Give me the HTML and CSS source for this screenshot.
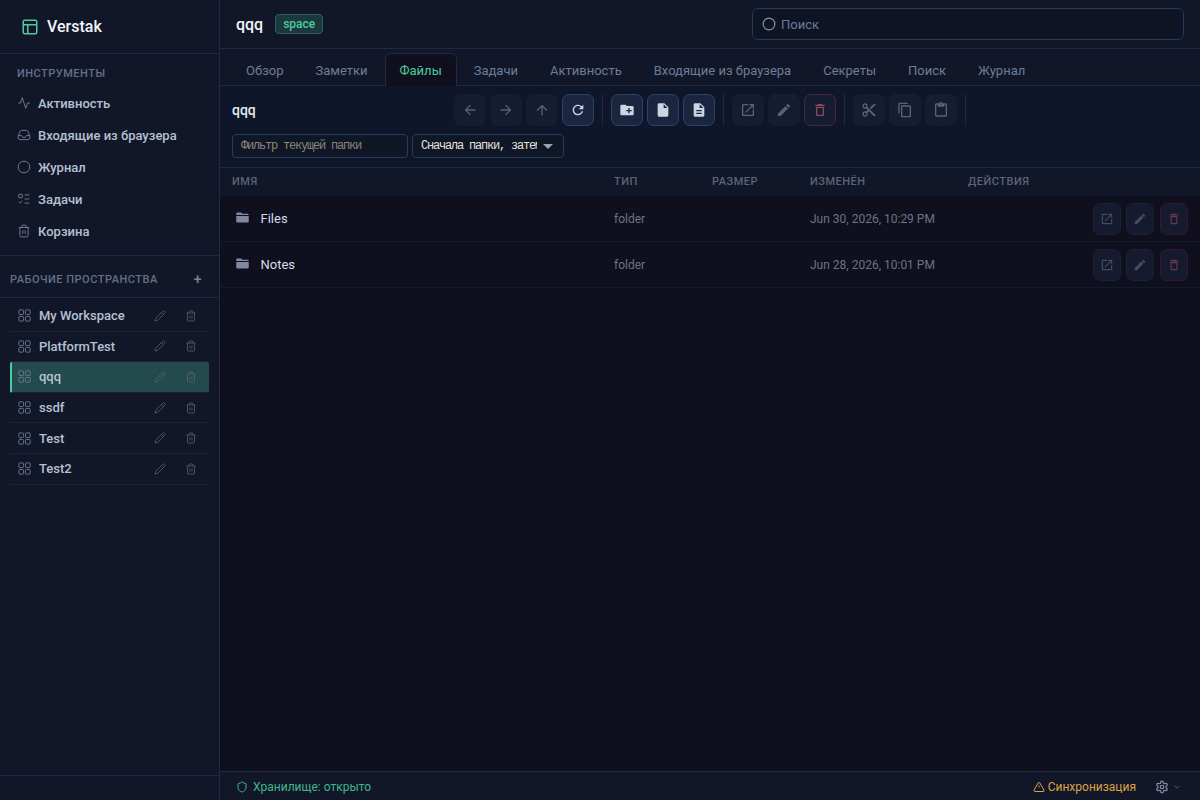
FILE: index.html
```html
<!DOCTYPE html>
<html lang="ru">
<head>
    <meta charset="UTF-8">
    <title>Verstak</title>
    <link rel="stylesheet" href="styles.css">
</head>
<body>
    <svg class="defs" width="0" height="0">
        <symbol id="i-pencil" viewBox="0 0 24 24"><path d="M17 3a2.85 2.83 0 1 1 4 4L7.5 20.5 2 22l1.5-5.5Z M15 5l4 4"/></symbol>
        <symbol id="i-trash" viewBox="0 0 24 24"><path d="M3 6h18 M19 6v14a2 2 0 0 1-2 2H7a2 2 0 0 1-2-2V6 M8 6V4a2 2 0 0 1 2-2h4a2 2 0 0 1 2 2v2 M10 11v6 M14 11v6"/></symbol>
        <symbol id="i-grid" viewBox="0 0 24 24"><rect x="3" y="3" width="7.500" height="7.500" rx="1.500"/><rect x="13.500" y="3" width="7.500" height="7.500" rx="1.500"/><rect x="3" y="13.500" width="7.500" height="7.500" rx="1.500"/><rect x="13.500" y="13.500" width="7.500" height="7.500" rx="1.500"/></symbol>
        <symbol id="m-open" viewBox="0 0 24 24"><path d="M19 19H5V5h7V3H5c-1.11 0-2 .9-2 2v14c0 1.1.89 2 2 2h14c1.1 0 2-.9 2-2v-7h-2v7zM14 3v2h3.59l-9.83 9.83 1.41 1.41L19 6.41V10h2V3h-7z"/></symbol>
        <symbol id="m-edit" viewBox="0 0 24 24"><path d="M3 17.25V21h3.75L17.81 9.94l-3.75-3.75L3 17.25zM20.71 7.04c.39-.39.39-1.02 0-1.41l-2.34-2.34c-.39-.39-1.02-.39-1.41 0l-1.83 1.83 3.75 3.75 1.83-1.83z"/></symbol>
        <symbol id="m-delete" viewBox="0 0 24 24"><path d="M6 19c0 1.1.9 2 2 2h8c1.1 0 2-.9 2-2V7H6v12zM8 9h8v10H8V9zm7.5-5l-1-1h-5l-1 1H5v2h14V4h-3.5z"/></symbol>
        <symbol id="m-folder" viewBox="0 0 24 24"><path d="M4 4h6l2 2h8c1.1 0 2 .9 2 2H2V6c0-1.1.9-2 2-2zM2 9.500h20V18c0 1.100-.9 2-2 2H4c-1.100 0-2-.9-2-2z"/></symbol>
    </svg>

    <div class="app">
        <aside class="sidebar">
            <div class="brand">
                <svg class="brand-icon" viewBox="0 0 24 24"><rect x="3" y="3" width="18" height="18" rx="2"/><path d="M3 9h18 M9 9v12"/></svg>
                <span>Verstak</span>
            </div>

            <div class="tools">
                <div class="section-title">ИНСТРУМЕНТЫ</div>
                <a class="tool">
                    <svg class="line-icon" viewBox="0 0 24 24"><path d="M22 12h-4l-3 9L9 3l-3 9H2"/></svg>
                    Активность
                </a>
                <a class="tool">
                    <svg class="line-icon" viewBox="0 0 24 24"><path d="M22 13h-6l-2 3h-4l-2-3H2 M5.500 6 2.500 12.500a3 3 0 0 0-.5 1.500v3a3 3 0 0 0 3 3h14a3 3 0 0 0 3-3v-3a3 3 0 0 0-.5-1.500L18.500 6a3 3 0 0 0-2.500-2H8a3 3 0 0 0-2.500 2z"/></svg>
                    Входящие из браузера
                </a>
                <a class="tool">
                    <svg class="line-icon" viewBox="0 0 24 24"><circle cx="12" cy="12" r="10"/></svg>
                    Журнал
                </a>
                <a class="tool">
                    <svg class="line-icon" viewBox="0 0 24 24"><rect x="3" y="4" width="6" height="6" rx="1"/><path d="M13 5h8 M13 12h8 M13 19h8 M3 17l2 2 4-4"/></svg>
                    Задачи
                </a>
                <a class="tool">
                    <svg class="line-icon" viewBox="0 0 24 24"><use href="#i-trash"/></svg>
                    Корзина
                </a>
            </div>

            <div class="ws-head">
                <span>РАБОЧИЕ ПРОСТРАНСТВА</span>
                <span class="ws-add">+</span>
            </div>

            <ul class="ws-list">
                <li class="ws-item">
                    <svg class="ws-icon"><use href="#i-grid"/></svg>
                    <span class="ws-name">My Workspace</span>
                    <svg class="ws-act"><use href="#i-pencil"/></svg>
                    <svg class="ws-act"><use href="#i-trash"/></svg>
                </li>
                <li class="ws-item">
                    <svg class="ws-icon"><use href="#i-grid"/></svg>
                    <span class="ws-name">PlatformTest</span>
                    <svg class="ws-act"><use href="#i-pencil"/></svg>
                    <svg class="ws-act"><use href="#i-trash"/></svg>
                </li>
                <li class="ws-item active">
                    <svg class="ws-icon"><use href="#i-grid"/></svg>
                    <span class="ws-name">qqq</span>
                    <svg class="ws-act"><use href="#i-pencil"/></svg>
                    <svg class="ws-act"><use href="#i-trash"/></svg>
                </li>
                <li class="ws-item">
                    <svg class="ws-icon"><use href="#i-grid"/></svg>
                    <span class="ws-name">ssdf</span>
                    <svg class="ws-act"><use href="#i-pencil"/></svg>
                    <svg class="ws-act"><use href="#i-trash"/></svg>
                </li>
                <li class="ws-item">
                    <svg class="ws-icon"><use href="#i-grid"/></svg>
                    <span class="ws-name">Test</span>
                    <svg class="ws-act"><use href="#i-pencil"/></svg>
                    <svg class="ws-act"><use href="#i-trash"/></svg>
                </li>
                <li class="ws-item">
                    <svg class="ws-icon"><use href="#i-grid"/></svg>
                    <span class="ws-name">Test2</span>
                    <svg class="ws-act"><use href="#i-pencil"/></svg>
                    <svg class="ws-act"><use href="#i-trash"/></svg>
                </li>
            </ul>

            <div class="side-foot"></div>
        </aside>

        <main class="main">
            <header class="topbar">
                <div class="title-wrap">
                    <h1>qqq</h1>
                    <span class="badge">space</span>
                </div>
                <div class="search">
                    <svg class="search-icon" viewBox="0 0 24 24"><circle cx="12" cy="12" r="10"/></svg>
                    <span>Поиск</span>
                </div>
            </header>

            <nav class="tabs">
                <a class="tab">Обзор</a>
                <a class="tab">Заметки</a>
                <a class="tab active">Файлы</a>
                <a class="tab">Задачи</a>
                <a class="tab">Активность</a>
                <a class="tab">Входящие из браузера</a>
                <a class="tab">Секреты</a>
                <a class="tab">Поиск</a>
                <a class="tab">Журнал</a>
            </nav>

            <section class="toolbar">
                <div class="toolbar-top">
                    <div class="path">qqq</div>
                    <div class="tool-group">
                        <button class="tb off"><svg viewBox="0 0 24 24"><path d="M20 11H7.830l5.590-5.590L12 4l-8 8 8 8 1.410-1.410L7.830 13H20v-2z"/></svg></button>
                        <button class="tb off"><svg viewBox="0 0 24 24"><path d="M12 4l-1.410 1.410L16.170 11H4v2h12.170l-5.580 5.590L12 20l8-8z"/></svg></button>
                        <button class="tb off"><svg viewBox="0 0 24 24"><path d="M4 12l1.410 1.410L11 7.830V20h2V7.830l5.580 5.590L20 12l-8-8-8 8z"/></svg></button>
                        <button class="tb on"><svg viewBox="0 0 24 24"><path d="M17.650 6.350A7.958 7.958 0 0 0 12 4c-4.420 0-7.990 3.580-7.990 8s3.570 8 7.990 8c3.730 0 6.840-2.550 7.730-6h-2.080A5.990 5.990 0 0 1 12 18c-3.310 0-6-2.690-6-6s2.690-6 6-6c1.660 0 3.140.690 4.220 1.780L13 11h7V4l-2.350 2.350z"/></svg></button>
                    </div>
                    <div class="tool-group">
                        <button class="tb on"><svg viewBox="0 0 24 24"><path d="M20 6h-8l-2-2H4c-1.110 0-1.990.890-1.990 2L2 18c0 1.110.890 2 2 2h16c1.110 0 2-.890 2-2V8c0-1.110-.890-2-2-2zm-1 8h-3v3h-2v-3h-3v-2h3V9h2v3h3v2z"/></svg></button>
                        <button class="tb on"><svg viewBox="0 0 24 24"><path d="M6 2c-1.100 0-1.990.900-1.990 2L4 20c0 1.100.890 2 1.990 2H18c1.100 0 2-.900 2-2V8l-6-6H6zm7 7V3.500L18.500 9H13z"/></svg></button>
                        <button class="tb on"><svg viewBox="0 0 24 24"><path d="M14 2H6c-1.100 0-1.990.900-1.990 2L4 20c0 1.100.890 2 1.990 2H18c1.100 0 2-.900 2-2V8l-6-6zm2 16H8v-2h8v2zm0-4H8v-2h8v2zm-3-5V3.500L18.500 9H13z"/></svg></button>
                    </div>
                    <div class="tool-group">
                        <button class="tb off"><svg><use href="#m-open"/></svg></button>
                        <button class="tb off"><svg><use href="#m-edit"/></svg></button>
                        <button class="tb off danger"><svg><use href="#m-delete"/></svg></button>
                    </div>
                    <div class="tool-group">
                        <button class="tb off"><svg viewBox="0 0 24 24"><path d="M9.640 7.640c.23-.5.36-1.050.36-1.640 0-2.210-1.790-4-4-4S2 3.790 2 6s1.790 4 4 4c.59 0 1.140-.13 1.640-.36L10 12l-2.360 2.360C7.140 14.130 6.590 14 6 14c-2.210 0-4 1.790-4 4s1.790 4 4 4 4-1.790 4-4c0-.59-.13-1.140-.36-1.640L12 14l7 7h3v-1L9.640 7.640zM6 8c-1.100 0-2-.89-2-2s.9-2 2-2 2 .89 2 2-.9 2-2 2zm0 12c-1.100 0-2-.89-2-2s.9-2 2-2 2 .89 2 2-.9 2-2 2zm6-7.500c-.28 0-.5-.22-.5-.5s.22-.5.5-.5.5.22.5.5-.22.5-.5.5zM19 3l-6 6 2 2 7-7V3h-3z"/></svg></button>
                        <button class="tb off"><svg viewBox="0 0 24 24"><path d="M16 1H4c-1.100 0-2 .9-2 2v14h2V3h12V1zm3 4H8c-1.100 0-2 .9-2 2v14c0 1.100.9 2 2 2h11c1.100 0 2-.9 2-2V7c0-1.100-.9-2-2-2zm0 16H8V7h11v14z"/></svg></button>
                        <button class="tb off"><svg viewBox="0 0 24 24"><path d="M19 2h-4.180C14.400.84 13.300 0 12 0c-1.300 0-2.400.84-2.820 2H5c-1.100 0-2 .9-2 2v16c0 1.100.9 2 2 2h14c1.100 0 2-.9 2-2V4c0-1.100-.9-2-2-2zm-7 0c.55 0 1 .45 1 1s-.45 1-1 1-1-.45-1-1 .45-1 1-1zm7 18H5V4h2v3h10V4h2v16z"/></svg></button>
                    </div>
                </div>
                <div class="toolbar-bottom">
                    <input class="filter" type="text" placeholder="Фильтр текущей папки">
                    <div class="sort-wrap">
                        <select class="sort">
                            <option>Сначала папки, затем файлы</option>
                        </select>
                        <span class="sort-arrow"></span>
                    </div>
                </div>
            </section>

            <div class="table">
                <div class="row head">
                    <div>ИМЯ</div>
                    <div>ТИП</div>
                    <div>РАЗМЕР</div>
                    <div>ИЗМЕНЁН</div>
                    <div>ДЕЙСТВИЯ</div>
                </div>
                <div class="row item">
                    <div class="name"><svg class="folder"><use href="#m-folder"/></svg>Files</div>
                    <div class="muted">folder</div>
                    <div></div>
                    <div class="muted">Jun 30, 2026, 10:29 PM</div>
                    <div class="actions">
                        <button class="ra"><svg><use href="#m-open"/></svg></button>
                        <button class="ra"><svg><use href="#m-edit"/></svg></button>
                        <button class="ra danger"><svg><use href="#m-delete"/></svg></button>
                    </div>
                </div>
                <div class="row item">
                    <div class="name"><svg class="folder"><use href="#m-folder"/></svg>Notes</div>
                    <div class="muted">folder</div>
                    <div></div>
                    <div class="muted">Jun 28, 2026, 10:01 PM</div>
                    <div class="actions">
                        <button class="ra"><svg><use href="#m-open"/></svg></button>
                        <button class="ra"><svg><use href="#m-edit"/></svg></button>
                        <button class="ra danger"><svg><use href="#m-delete"/></svg></button>
                    </div>
                </div>
            </div>

            <footer class="statusbar">
                <div class="vault">
                    <svg class="st-icon" viewBox="0 0 24 24"><path d="M20 13c0 5-3.500 7.500-7.660 8.950a1 1 0 0 1-.67-.01C7.500 20.500 4 18 4 13V6a1 1 0 0 1 1-1c2 0 4.500-1.200 6.240-2.720a1.170 1.170 0 0 1 1.520 0C14.510 3.810 17 5 19 5a1 1 0 0 1 1 1z"/></svg>
                    Хранилище: открыто
                </div>
                <div class="status-right">
                    <div class="sync">
                        <svg class="st-icon" viewBox="0 0 24 24"><path d="m21.730 18-8-14a2 2 0 0 0-3.480 0l-8 14A2 2 0 0 0 4 21h16a2 2 0 0 0 1.730-3 M12 9v4 M12 17h.01"/></svg>
                        Синхронизация
                    </div>
                    <div class="settings">
                        <svg class="gear" viewBox="0 0 24 24"><path d="M12.220 2h-.44a2 2 0 0 0-2 2v.18a2 2 0 0 1-1 1.730l-.43.25a2 2 0 0 1-2 0l-.15-.08a2 2 0 0 0-2.730.73l-.22.38a2 2 0 0 0 .73 2.730l.15.1a2 2 0 0 1 1 1.720v.51a2 2 0 0 1-1 1.740l-.15.09a2 2 0 0 0-.73 2.730l.22.38a2 2 0 0 0 2.730.73l.15-.08a2 2 0 0 1 2 0l.43.25a2 2 0 0 1 1 1.730V20a2 2 0 0 0 2 2h.44a2 2 0 0 0 2-2v-.18a2 2 0 0 1 1-1.730l.43-.25a2 2 0 0 1 2 0l.15.08a2 2 0 0 0 2.730-.73l.22-.39a2 2 0 0 0-.73-2.730l-.15-.08a2 2 0 0 1-1-1.740v-.5a2 2 0 0 1 1-1.740l.15-.09a2 2 0 0 0 .73-2.730l-.22-.38a2 2 0 0 0-2.730-.73l-.15.08a2 2 0 0 1-2 0l-.43-.25a2 2 0 0 1-1-1.730V4a2 2 0 0 0-2-2z"/><circle cx="12" cy="12" r="3"/></svg>
                        <svg class="chev" viewBox="0 0 24 24"><path d="m6 9 6 6 6-6"/></svg>
                    </div>
                </div>
            </footer>
        </main>
    </div>
</body>
</html>
```

FILE: styles.css
```css
* {
    box-sizing: border-box;
}

body {
    margin: 0;
    height: 800px;
    overflow: hidden;
    font-family: Roboto, "Noto Sans", sans-serif;
    font-size: 13px;
    color: #cbd5e1;
    background: #0f0f1a;
}

.defs {
    position: absolute;
}

.app {
    display: flex;
    height: 800px;
}

/* sidebar */
.sidebar {
    width: 220px;
    flex: none;
    display: flex;
    flex-direction: column;
    background: #111729;
    border-right: 1px solid #1e2a45;
}

.brand {
    height: 54px;
    flex: none;
    display: flex;
    align-items: center;
    gap: 8px;
    padding: 0 21px;
    font-size: 16px;
    font-weight: 500;
    color: #f1f5f9;
    border-bottom: 1px solid #1e2a45;
}

.brand-icon {
    width: 18px;
    height: 18px;
    fill: none;
    stroke: #4ecb9d;
    stroke-width: 2;
}

.tools {
    padding: 11px 0 8px;
    border-bottom: 1px solid #1e2a45;
}

.section-title {
    height: 17px;
    line-height: 17px;
    padding: 0 17px;
    margin-bottom: 5px;
    font-size: 11px;
    font-weight: 500;
    letter-spacing: 0.5px;
    color: #64708a;
}

.tool {
    height: 32px;
    display: flex;
    align-items: center;
    gap: 7px;
    padding: 0 17px;
    font-size: 13px;
    font-weight: 500;
    color: #b6c0d4;
}

.line-icon {
    width: 14px;
    height: 14px;
    flex: none;
    fill: none;
    stroke: #7a8499;
    stroke-width: 1.500;
}

.ws-head {
    height: 42px;
    flex: none;
    display: flex;
    align-items: center;
    justify-content: space-between;
    padding: 5px 17px 0 10px;
    font-size: 11px;
    font-weight: 500;
    letter-spacing: 0.5px;
    color: #64708a;
    border-bottom: 1px solid #1e2a45;
}

.ws-add {
    font-size: 14px;
    color: #7a8499;
}

.ws-list {
    list-style: none;
    margin: 3px 10px 0;
    padding: 0;
    flex: 1;
}

.ws-item {
    height: 30.600px;
    display: flex;
    align-items: center;
    padding: 0 12px 0 7px;
    font-size: 13px;
    font-weight: 500;
    color: #b6c0d4;
    border-bottom: 1px solid #1a2238;
}

.ws-item.active {
    background: #234a4c;
    border-left: 2px solid #4ecb9d;
    padding-left: 5px;
    border-radius: 2px;
}

.ws-icon {
    width: 15px;
    height: 15px;
    flex: none;
    margin-right: 7px;
    fill: none;
    stroke: #6e7890;
    stroke-width: 1.500;
}

.ws-name {
    flex: 1;
}

.ws-act {
    width: 12px;
    height: 12px;
    flex: none;
    margin-left: 19px;
    fill: none;
    stroke: #5a6479;
    stroke-width: 1.500;
}

.side-foot {
    height: 25px;
    flex: none;
    border-top: 1px solid #1e2a45;
}

/* main */
.main {
    flex: 1;
    display: flex;
    flex-direction: column;
    min-width: 0;
}

.topbar {
    height: 49px;
    flex: none;
    display: flex;
    align-items: center;
    justify-content: space-between;
    padding: 0 16px;
    background: #111729;
    border-bottom: 1px solid #1e2a45;
}

.title-wrap {
    display: flex;
    align-items: center;
    gap: 12px;
}

h1 {
    margin: 0;
    font-size: 16px;
    font-weight: 500;
    color: #f1f5f9;
}

.badge {
    height: 20px;
    line-height: 18px;
    padding: 0 7px;
    font-size: 12px;
    font-weight: 500;
    color: #4ecb9d;
    background: #19393d;
    border: 1px solid #2a6058;
    border-radius: 4px;
}

.search {
    width: 432px;
    height: 32px;
    display: flex;
    align-items: center;
    gap: 5px;
    padding: 0 9px;
    font-size: 13px;
    color: #6b7a96;
    background: #0e1424;
    border: 1px solid #263a5e;
    border-radius: 6px;
}

.search-icon {
    width: 14px;
    height: 14px;
    fill: none;
    stroke: #8a94a8;
    stroke-width: 2;
}

.tabs {
    height: 37px;
    flex: none;
    display: flex;
    align-items: flex-end;
    gap: 2px;
    padding: 0 11px;
    background: #111729;
    border-bottom: 1px solid #1e2a45;
}

.tab {
    height: 33px;
    margin-bottom: -1px;
    line-height: 33px;
    padding: 0 14px;
    font-size: 13px;
    color: #6f7c96;
    border: 1px solid transparent;
    border-bottom: none;
    border-radius: 6px 6px 0 0;
}

.tab.active {
    color: #4ecb9d;
    background: #0f0f1e;
    border-color: #1e2a45;
}

/* toolbar */
.toolbar {
    height: 82px;
    flex: none;
    padding: 8px 12px 0;
    background: #10162a;
    border-bottom: 1px solid #1e2a45;
}

.toolbar-top {
    display: flex;
    align-items: center;
    height: 32px;
}

.path {
    width: 222px;
    flex: none;
    font-size: 14px;
    font-weight: 500;
    color: #e2e8f0;
}

.tool-group {
    display: flex;
    gap: 4px;
    padding-right: 8px;
    margin-right: 8px;
    border-right: 1px solid #1e2a45;
}

.tb {
    width: 32px;
    height: 32px;
    display: flex;
    align-items: center;
    justify-content: center;
    padding: 0;
    border-radius: 7px;
    border: 1px solid transparent;
}

.tb svg {
    width: 16px;
    height: 16px;
}

.tb.off {
    background: #161d33;
    border-color: #161d33;
}

.tb.off svg {
    fill: #5a6274;
}

.tb.on {
    background: #1a2640;
    border-color: #2a4468;
}

.tb.on svg {
    fill: #cbd5e1;
}

.tb.danger {
    border-color: #4a2540;
}

.tb.danger svg {
    fill: #8a4a5c;
}

.toolbar-bottom {
    display: flex;
    gap: 4px;
    margin-top: 8px;
}

.filter,
.sort {
    height: 24px;
    font-family: "Liberation Mono", monospace;
    font-size: 12px;
    letter-spacing: -1.200px;
    color: #e5e0d8;
    background: #0f1626;
    border: 1px solid #263a5e;
    border-radius: 4px;
    outline: none;
}

.filter {
    width: 176px;
    padding: 0 8px;
}

.filter::placeholder {
    color: #8a8478;
}

.sort-wrap {
    position: relative;
    width: 152px;
}

.sort {
    width: 100%;
    padding: 0 26px 0 8px;
    appearance: none;
}

.sort-arrow {
    position: absolute;
    top: 10px;
    right: 11px;
    width: 0;
    height: 0;
    border-left: 5px solid transparent;
    border-right: 5px solid transparent;
    border-top: 5px solid #9aa3b5;
}

/* table */
.table {
    flex: 1;
    background: #0f0f1e;
}

.row {
    display: grid;
    grid-template-columns: 382px 98px 98px 158px 1fr;
    align-items: center;
}

.row > div {
    padding-left: 12px;
}

.head {
    height: 28px;
    font-size: 11px;
    font-weight: 500;
    letter-spacing: 0.5px;
    color: #5b6478;
    background: #111729;
    border-bottom: 1px solid #131a2e;
}

.item {
    height: 46px;
    font-size: 12px;
    border-bottom: 1px solid #141a2e;
}

.name {
    display: flex;
    align-items: center;
    gap: 11px;
    font-size: 13px;
    color: #d5dceb;
    padding-left: 14.500px !important;
}

.folder {
    width: 15px;
    height: 15px;
    fill: #8088a0;
    margin-top: -3px;
}

.muted {
    color: #6b7386;
}

.actions {
    display: flex;
    justify-content: flex-end;
    gap: 5px;
    padding-right: 12px;
}

.ra {
    width: 28px;
    height: 32px;
    display: flex;
    align-items: center;
    justify-content: center;
    padding: 0;
    background: #151a2e;
    border: 1px solid #1a2238;
    border-radius: 7px;
}

.ra + .ra + .ra {
    margin-left: 1px;
}

.ra svg {
    width: 14px;
    height: 14px;
    fill: #454c5e;
}

.ra.danger {
    border-color: #33192e;
}

.ra.danger svg {
    fill: #6a3a4c;
}

/* status */
.statusbar {
    height: 29px;
    flex: none;
    display: flex;
    align-items: center;
    justify-content: space-between;
    padding: 2px 18px 0 16px;
    font-size: 12px;
    background: #111729;
    border-top: 1px solid #1e2a45;
}

.vault,
.sync,
.settings,
.status-right {
    display: flex;
    align-items: center;
}

.vault {
    gap: 5px;
    color: #3fb68e;
}

.sync {
    gap: 3px;
    color: #d9a441;
}

.st-icon {
    width: 12px;
    height: 12px;
    fill: none;
    stroke: currentColor;
    stroke-width: 2;
}

.settings {
    margin-left: 19px;
    gap: 3px;
}

.gear {
    width: 14px;
    height: 14px;
    fill: none;
    stroke: #8a94a8;
    stroke-width: 2;
}

.chev {
    width: 10px;
    height: 10px;
    fill: none;
    stroke: #5a6479;
    stroke-width: 2;
}
```
